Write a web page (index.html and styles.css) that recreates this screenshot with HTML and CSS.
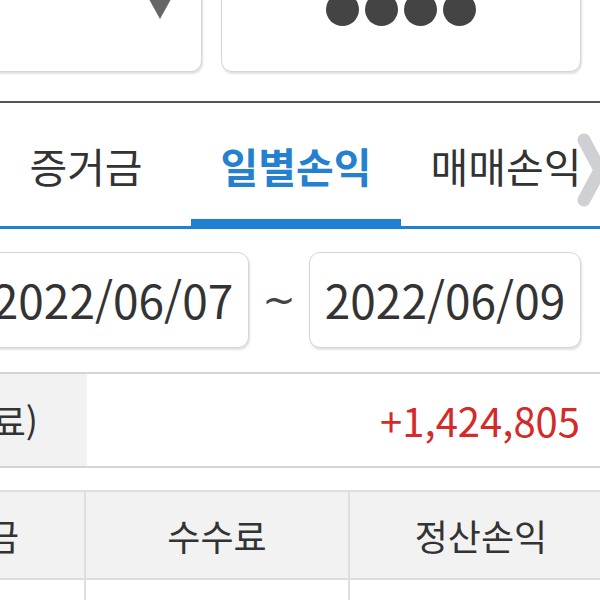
FILE: index.html
```html
<!DOCTYPE html>
<html lang="ko">
<head>
  <meta charset="UTF-8" />
  <meta name="viewport" content="width=device-width, initial-scale=1.0"/>
  <title>일별손익</title>
  <link rel="stylesheet" href="styles.css">
</head>
<body>
  <div class="top-row">
    <div class="select-box"><span class="caret"></span></div>
    <div class="pw-box">
      <span class="dot"></span><span class="dot"></span><span class="dot"></span><span class="dot"></span>
    </div>
  </div>

  <div class="divider"></div>

  <nav class="tabs">
    <div class="tab">증거금</div>
    <div class="tab active">일별손익</div>
    <div class="tab">매매손익</div>
    <svg class="tab-arrow" width="28" height="76" viewBox="0 0 28 76">
      <polyline points="9,8 25,38 9,68" fill="none" stroke="#cfd0d3" stroke-width="13" stroke-linecap="round" stroke-linejoin="round"/>
    </svg>
  </nav>

  <div class="date-row">
    <div class="date-box">2022/06/07</div>
    <span class="tilde">~</span>
    <div class="date-box">2022/06/09</div>
  </div>

  <div class="summary">
    <div class="summary-label"><span>정산손익(수수료)</span></div>
    <div class="summary-value">+1,424,805</div>
  </div>

  <table class="grid">
    <thead>
      <tr>
        <th>거래대금</th>
        <th>수수료</th>
        <th>정산손익</th>
      </tr>
    </thead>
    <tbody>
      <tr>
        <td>&nbsp;</td>
        <td>&nbsp;</td>
        <td>&nbsp;</td>
      </tr>
    </tbody>
  </table>
</body>
</html>
```

FILE: styles.css
```css
html, body {
  margin: 0;
  height: 600px;
  overflow: hidden;
}

body {
  font-family: "Noto Sans CJK KR", "Noto Sans", sans-serif;
  color: #333;
  background: #fff;
}

/* 상단 입력 박스 */
.top-row {
  display: flex;
  gap: 19px;
  margin-top: -40px;
  margin-left: -40px;
}

.select-box,
.pw-box,
.date-box {
  box-sizing: border-box;
  background: #fff;
  border: 1px solid #d6d6d6;
  border-radius: 11px;
  box-shadow: 1px 2px 2px rgba(0, 0, 0, 0.12);
}

.select-box {
  width: 242px;
  height: 112px;
  display: flex;
  justify-content: flex-end;
  align-items: flex-start;
  padding: 0 26px 0 0;
}

.caret {
  width: 0;
  height: 0;
  margin-top: 31px;
  border-left: 15px solid transparent;
  border-right: 15px solid transparent;
  border-top: 27px solid #666;
}

.pw-box {
  width: 360px;
  height: 112px;
  display: flex;
  justify-content: center;
  align-items: flex-start;
  gap: 6px;
  padding-top: 32px;
}

.dot {
  width: 33px;
  height: 33px;
  border-radius: 50%;
  background: #444;
}

.divider {
  height: 2px;
  margin-top: 29px;
  background: #555;
}

/* 탭 */
.tabs {
  display: flex;
  align-items: flex-start;
  margin-left: -19px;
  border-bottom: 3px solid #1f7fd0;
}

.tab {
  flex: 0 0 210px;
  height: 116px;
  line-height: 124px;
  text-align: center;
  font-size: 41px;
  color: #333;
  border-bottom: 7px solid transparent;
}

.tab.active {
  color: #2680d0;
  font-weight: 700;
  border-bottom-color: #1f7fd0;
}

.tab-arrow {
  flex: none;
  margin: 29px 0 0 -36px;
}

/* 조회기간 */
.date-row {
  display: flex;
  align-items: center;
  margin: 23px 0 0 -23px;
}

.date-box {
  width: 272px;
  height: 96px;
  line-height: 92px;
  text-align: center;
  font-size: 46px;
  color: #333;
}

.tilde {
  width: 60px;
  text-align: center;
  font-family: "DejaVu Sans", sans-serif;
  font-size: 40px;
  color: #444;
}

/* 합계 */
.summary {
  display: flex;
  margin-top: 24px;
  border-top: 2px solid #d4d4d4;
  border-bottom: 2px solid #d4d4d4;
}

.summary-label {
  flex: none;
  box-sizing: border-box;
  width: 87px;
  height: 92px;
  display: flex;
  justify-content: flex-end;
  align-items: center;
  padding-right: 49px;
  background: #f2f2f2;
  font-size: 36px;
  white-space: nowrap;
  overflow: hidden;
}

.summary-label span {
  flex: none;
}

.summary-value {
  flex: 1;
  line-height: 92px;
  text-align: right;
  padding-right: 20px;
  font-size: 40px;
  color: #d42a2a;
}

/* 목록 */
.grid {
  border-collapse: collapse;
  table-layout: fixed;
  width: 786px;
  margin: 22px 0 0 -180px;
}

.grid th,
.grid td {
  width: 262px;
  border: 2px solid #dedede;
  font-size: 36px;
  font-weight: 400;
  color: #333;
  text-align: center;
  padding: 0;
}

.grid th {
  height: 86px;
  background: #f2f2f2;
}

.grid td {
  height: 86px;
}
```
